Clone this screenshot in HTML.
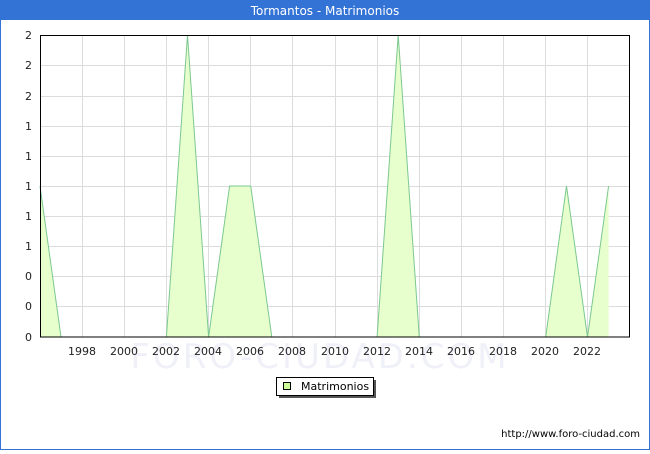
<!DOCTYPE html><html><head><style>body{margin:0;width:650px;height:450px;overflow:hidden;background:#fff;font-family:"DejaVu Sans",sans-serif}</style></head><body>
<svg width="650" height="450" xmlns="http://www.w3.org/2000/svg" font-family="DejaVu Sans, sans-serif" font-size="11">
<rect x="0.5" y="0.5" width="649" height="449" fill="#fff" stroke="#3473d6"/>
<rect x="0" y="0" width="650" height="20" fill="#3473d6"/>
<text x="325" y="15" text-anchor="middle" fill="#fff" font-size="12">Tormantos - Matrimonios</text>
<g stroke="#dcdcdc" stroke-width="1">
<line x1="40" x2="630" y1="65.5" y2="65.5"/><line x1="40" x2="630" y1="96.5" y2="96.5"/><line x1="40" x2="630" y1="126.5" y2="126.5"/><line x1="40" x2="630" y1="156.5" y2="156.5"/><line x1="40" x2="630" y1="186.5" y2="186.5"/><line x1="40" x2="630" y1="216.5" y2="216.5"/><line x1="40" x2="630" y1="246.5" y2="246.5"/><line x1="40" x2="630" y1="276.5" y2="276.5"/><line x1="40" x2="630" y1="306.5" y2="306.5"/>
<line x1="82.5" x2="82.5" y1="35" y2="337"/><line x1="124.5" x2="124.5" y1="35" y2="337"/><line x1="166.5" x2="166.5" y1="35" y2="337"/><line x1="208.5" x2="208.5" y1="35" y2="337"/><line x1="250.5" x2="250.5" y1="35" y2="337"/><line x1="292.5" x2="292.5" y1="35" y2="337"/><line x1="335.5" x2="335.5" y1="35" y2="337"/><line x1="377.5" x2="377.5" y1="35" y2="337"/><line x1="419.5" x2="419.5" y1="35" y2="337"/><line x1="461.5" x2="461.5" y1="35" y2="337"/><line x1="503.5" x2="503.5" y1="35" y2="337"/><line x1="545.5" x2="545.5" y1="35" y2="337"/><line x1="587.5" x2="587.5" y1="35" y2="337"/>
</g>
<text x="320" y="368" text-anchor="middle" font-size="34" fill="#f0f0f8" letter-spacing="3">FORO-CIUDAD.COM</text>
<polygon points="40,186 61,337 166.4,337 187.5,35 208.6,337 229.6,186 250.7,186 271.8,337 377.1,337 398.2,35 419.3,337 545.7,337 566.5,186 587.5,337 608.6,186 608.6,337 40,337" fill="#e6ffcc"/>
<polyline points="40,186 61,337 166.4,337 187.5,35 208.6,337 229.6,186 250.7,186 271.8,337 377.1,337 398.2,35 419.3,337 545.7,337 566.5,186 587.5,337 608.6,186" fill="none" stroke="#7cc890" stroke-width="1"/>
<rect x="40.5" y="35.5" width="589" height="301.5" fill="none" stroke="#000"/>
<g text-anchor="end" fill="#222">
<text x="32" y="39">2</text><text x="32" y="69">2</text><text x="32" y="100">2</text><text x="32" y="130">1</text><text x="32" y="160">1</text><text x="32" y="190">1</text><text x="32" y="220">1</text><text x="32" y="250">1</text><text x="32" y="280">0</text><text x="32" y="310">0</text><text x="32" y="341">0</text>
</g>
<g text-anchor="middle" fill="#222">
<text x="82" y="355">1998</text><text x="124" y="355">2000</text><text x="166" y="355">2002</text><text x="208" y="355">2004</text><text x="250" y="355">2006</text><text x="292" y="355">2008</text><text x="335" y="355">2010</text><text x="377" y="355">2012</text><text x="419" y="355">2014</text><text x="461" y="355">2016</text><text x="503" y="355">2018</text><text x="545" y="355">2020</text><text x="587" y="355">2022</text>
</g>
<rect x="279" y="380" width="97" height="18" fill="#555"/>
<rect x="276.5" y="377.5" width="97" height="18" fill="#fff" stroke="#000"/>
<rect x="283.5" y="382.5" width="7" height="7" fill="#ccff99" stroke="#000"/>
<text x="301" y="390" fill="#000">Matrimonios</text>
<text x="640" y="437" text-anchor="end" font-size="10" fill="#000">http://www.foro-ciudad.com</text>
</svg></body></html>
